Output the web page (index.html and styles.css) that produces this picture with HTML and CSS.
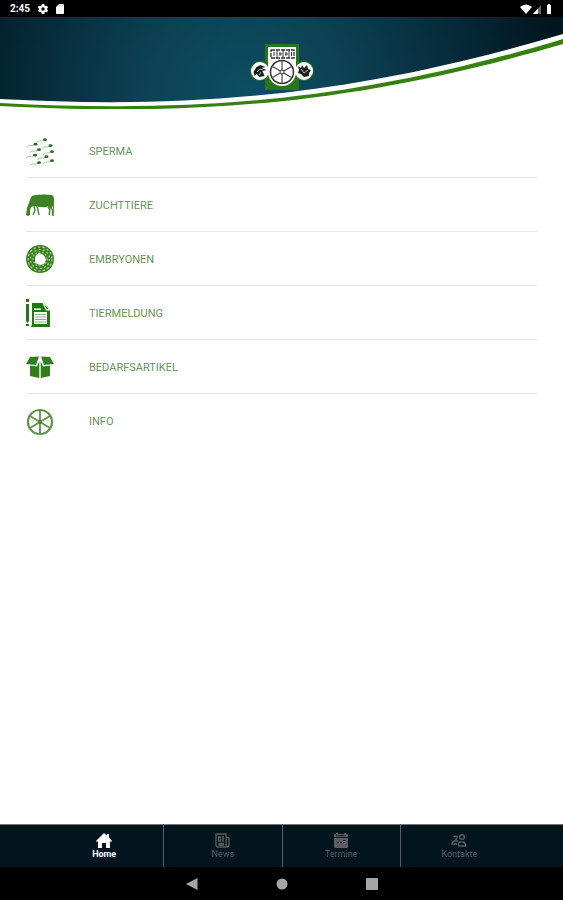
FILE: index.html
```html
<!DOCTYPE html>
<html lang="de">
<head>
  <meta charset="utf-8">
  <meta name="viewport" content="width=device-width, initial-scale=1">
  <title>Home</title>
  <link rel="stylesheet" href="styles.css">
</head>
<body>
  <div class="statusbar">
    <span class="time">2:45</span>
    <svg width="10" height="10" viewBox="0 0 24 24"><path fill="#fff" fill-rule="evenodd" d="M9 0h6l1 4 2 1 4-1 2 5-3 3 3 3-2 5-4-1-2 1-1 4H9l-1-4-2-1-4 1-2-5 3-3-3-3 2-5 4 1 2-1zM12 8a4 4 0 1 0 0 8 4 4 0 0 0 0-8z"/></svg>
    <svg class="sd" width="8" height="10" viewBox="0 0 8 10"><path fill="#fff" d="M3 0h4q1 0 1 1v8q0 1-1 1H1q-1 0-1-1V3z"/><path stroke="#999" d="M3.500 1v1.500M5 1v1.500M6.500 1v1.500" stroke-width=".5"/></svg>
    <svg class="signals" width="33" height="10" viewBox="0 0 33 10">
      <path fill="#fff" d="M0 3Q6 -2 12 3L6 10z"/>
      <path fill="#666" d="M21 1v9h-8z"/>
      <path fill="#fff" d="M18 4.400V10h-5z"/>
      <path fill="#fff" d="M27 1h1V0h2v1h1v9h-4z"/>
    </svg>
  </div>

  <header class="header">
    <svg class="swoosh" viewBox="0 0 563 92">
      <defs>
        <radialGradient id="sea" gradientUnits="userSpaceOnUse" cx="245" cy="75" r="310">
          <stop offset="0" stop-color="#0e4d62"/>
          <stop offset=".3" stop-color="#0c4355"/>
          <stop offset=".65" stop-color="#072d3d"/>
          <stop offset="1" stop-color="#021621"/>
        </radialGradient>
      </defs>
      <path fill="#35800f" d="M0 0H563V27C350 89 190 99 0 89z"/>
      <path fill="#fff" d="M0 0H563V22C350 86 190 96 0 86z"/>
      <path fill="url(#sea)" d="M0 0H563V17C350 80 190 92 0 82z"/>
    </svg>
    <svg class="logo" width="64" height="48" viewBox="0 0 64 48">
      <path fill="#28751c" d="M15 0h34v46H15z"/>
      <circle cx="10" cy="27" r="10" fill="#28751c"/>
      <circle cx="54" cy="27" r="10" fill="#28751c"/>
      <path fill="#fff" d="M18 3h28v24H18z"/>
      <circle cx="10" cy="27" r="9" fill="#fff"/>
      <circle cx="54" cy="27" r="9" fill="#fff"/>
      <circle cx="32" cy="28" r="14" fill="#fff"/>
      <path fill="none" stroke="#333" stroke-width="1.300" stroke-dasharray="4 1" d="M21 6h23v8H21z"/>
      <path fill="none" stroke="#333" d="M24 8v4M27 6v8M30 8v4M33 6v8M36 8v4M39 6v8M41.500 8v4M29 10h3M35 10h3"/>
      <circle cx="32" cy="28" r="11.500" fill="none" stroke="#333" stroke-width="1.500"/>
      <path stroke="#444" stroke-width="1.200" d="M32 17v22M22.500 22.500l19 11M41.500 22.500l-19 11"/>
      <circle cx="32" cy="28" r="2" fill="#fff" stroke="#333"/>
      <path fill="#181f1b" d="M3.500 28l3-5 4-2 5 2-4 1 5 2-4 1 2 5-5 1-3-3-2 2zM48 22l3 2 1-3 2 3 3-3 1 4 3 1-2 3v3l-5 1-3-3-3-1 1-3z"/>
      <path stroke="#fff" stroke-width=".7" fill="none" d="M7 28l3-3 3 1M9 31l2-3M51 25l3 4 4-3"/>
    </svg>
  </header>

  <main class="menu">
    <a class="item" href="#sperma">
      <svg class="icon" viewBox="0 0 28 28">
        <defs>
          <g id="cell">
            <path d="M-8 2.500q2-2 4-1.500t4-1" fill="none" stroke="#91a98b" stroke-width=".7"/>
            <ellipse cx="1" cy="-.3" rx="2" ry="1.400" fill="#22701a"/>
          </g>
        </defs>
        <use href="#cell" x="18" y="3"/><use href="#cell" x="8.500" y="7.500"/>
        <use href="#cell" x="23.500" y="9"/><use href="#cell" x="12" y="13"/>
        <use href="#cell" x="25" y="15"/><use href="#cell" x="8" y="18.500"/>
        <use href="#cell" x="19.500" y="20"/><use href="#cell" x="25" y="24"/>
        <use href="#cell" x="12" y="26"/>
      </svg>
      <span>SPERMA</span>
    </a>
    <a class="item" href="#zuchttiere">
      <svg class="icon" viewBox="0 0 28 28">
        <path fill="#3c8123" d="M7 4.500Q16 3 26 4q2 1 2 4l-.3 17h-1.700L27 23V15l-1.500 2-1.500 1-1.500-2.500Q18 17 11 15.500L8 15q-3 0-4 4v5l-2 1-2-1 1-7 3-8q1-4 3-4.500z"/>
        <path stroke="#4c8934" stroke-width="1.400" fill="none" d="M8 15l1 4-2 5M11 15l1 4 1 5M22 16l2 3-1 5M25 16l1.500 3v5"/>
      </svg>
      <span>ZUCHTTIERE</span>
    </a>
    <a class="item" href="#embryonen">
      <svg class="icon" viewBox="0 0 28 28">
        <circle cx="14" cy="14" r="9.500" fill="none" stroke="#39801f" stroke-width="9"/>
        <circle cx="14" cy="14" r="12" fill="none" stroke="#b9d2ac" stroke-width="1.200" stroke-dasharray="2.500 2"/>
        <circle cx="14" cy="14" r="9.500" fill="none" stroke="#b9d2ac" stroke-width="1.200" stroke-dasharray="2 2.300"/>
        <circle cx="14" cy="14" r="7" fill="none" stroke="#b9d2ac" stroke-width="1.200" stroke-dasharray="1.500 2"/>
        <path fill="#fff" d="M13 8l3 1 3 3 1 3-2 4-4 1-5-2v-4l1-4z"/>
      </svg>
      <span>EMBRYONEN</span>
    </a>
    <a class="item" href="#tiermeldung">
      <svg class="icon" viewBox="0 0 28 28">
        <path fill="#277416" d="M0 0h3v3H0zM0 5h3v17l-1.500 2L0 22zM0 25h3v2H0zM6 4h12l6 6v18H4.500L6 26z"/>
        <path fill="#fff" d="M16.500 4H18l6 6v1.500h-4z"/>
        <path fill="#277416" d="M18.500 5.500l4 4.500h-2z"/>
        <path fill="#fff" d="M8 9.500h7v1.500H8zM8 13h13v12H8z"/>
        <path stroke="#8bb07b" stroke-width="1.200" d="M9 15.500h11M9 18h11M9 20.500h11M9 23h11"/>
      </svg>
      <span>TIERMELDUNG</span>
    </a>
    <a class="item" href="#bedarfsartikel">
      <svg class="icon" viewBox="0 0 28 28">
        <path fill="#327d1d" d="M4 4l9-.5L10 12 0 11zM24 4l-9-.5L18 12l10-1zM4 12.500l7 1 2.300-5V25L4 23zM24 12.500l-7 1-2.300-5V25l9.300-2z"/>
      </svg>
      <span>BEDARFSARTIKEL</span>
    </a>
    <a class="item" href="#info">
      <svg class="icon" viewBox="0 0 28 28">
        <g fill="none" stroke="#5d9349">
          <circle cx="14" cy="14" r="12" stroke-width="2.200"/>
          <path stroke-width="1.800" d="M14 2v24M4 8l20 12M24 8L4 20"/>
        </g>
        <circle cx="14" cy="14" r="2" fill="#4d8a38"/>
      </svg>
      <span>INFO</span>
    </a>
  </main>

  <nav class="tabs">
    <a class="tab active" href="#home">
      <svg viewBox="0 0 16 16"><path fill="currentColor" d="M8 0l3 2.500V1h2v3.200L16 8l-1 1-1-.8V15h-4v-5H6v5H2V8.200L1 9 0 8z"/></svg>
      Home
    </a>
    <a class="tab" href="#news">
      <svg viewBox="0 0 16 16"><path fill="none" stroke="currentColor" stroke-width="1.300" d="M1 1h10v13H3q-2 0-2-2zM11 4l3 1v7q0 2-3 2M3.500 4h2v4h-2zM7 4h2M7 6h2M7 8h2M3.500 10.500H9M3.500 12H9"/></svg>
      News
    </a>
    <a class="tab" href="#termine">
      <svg viewBox="0 0 16 16"><path fill="currentColor" d="M1 2q0-1 1-1h1V0h2v1h6V0h2v1h1q1 0 1 1v2H1zM1 5h14v9q0 1-1 1H2q-1 0-1-1z"/><path stroke="#02141d" stroke-width=".8" d="M3 2.500h10M4 9.500h2M7 9.500h2M10 7.500h2.500M10 9.500h2"/></svg>
      Termine
    </a>
    <a class="tab" href="#kontakte">
      <svg viewBox="0 0 16 16"><g fill="none" stroke="currentColor" stroke-width="1.400"><circle cx="11" cy="4" r="2.300"/><path d="M8 13q-2-3 1-4h3q3 1 2.500 4zM2.500 4q2-2 3.500 0 0 2-1.500 3M7 8Q2 7 1 11h5"/></g></svg>
      Kontakte
    </a>
  </nav>

  <div class="sysnav">
    <button aria-label="Zurück"><svg viewBox="0 0 12 12"><path fill="currentColor" d="M11.500 0v12L0 6z"/></svg></button>
    <button aria-label="Startbildschirm"><svg viewBox="0 0 12 12"><circle cx="6" cy="6" r="5.500" fill="currentColor"/></svg></button>
    <button aria-label="Übersicht"><svg viewBox="0 0 12 12"><rect width="12" height="12" rx="1" fill="currentColor"/></svg></button>
  </div>
</body>
</html>
```
FILE: styles.css
```css
* { box-sizing: border-box; }
body { font-family: Roboto, Arial, sans-serif; margin: 0; min-height: 100vh; display: flex; flex-direction: column; background: #fff; }
a { text-decoration: none; }
svg { display: block; }

.statusbar { background: #000; color: #fff; height: 17px; padding: 0 10px; display: flex; align-items: center; gap: 8px; }
.time { font-size: 10px; font-weight: bold; }
.signals { margin-left: auto; }

.header { position: relative; }
.swoosh { width: 100%; }
.logo { position: absolute; top: 27px; left: 50%; transform: translateX(-50%); }

.menu { flex: 1; padding: 15px 26px; }
.item { display: flex; align-items: center; gap: 35px; height: 54px; padding-top: 1px; border-bottom: 1px solid #e6e6e6; color: #669656; font-size: 11px; }
.item:last-child { border-bottom: 0; }
.icon { width: 28px; height: 28px; }

.tabs { display: flex; justify-content: center; height: 43px; background: #02141d; border-top: 1px solid #777; }
.tab { width: 21%; display: flex; flex-direction: column; align-items: center; justify-content: center; color: #5a5d61; font-size: 9px; line-height: 11px; }
.tab + .tab { border-left: 1px solid #5a5d61; }
.tab svg { width: 16px; height: 16px; }
.tab.active { color: #fff; font-weight: bold; }

.sysnav { background: #000; height: 33px; display: flex; justify-content: center; align-items: center; gap: 78px; }
.sysnav button { width: 12px; height: 12px; padding: 0; border: 0; background: none; color: #a5a5a5; }
```
